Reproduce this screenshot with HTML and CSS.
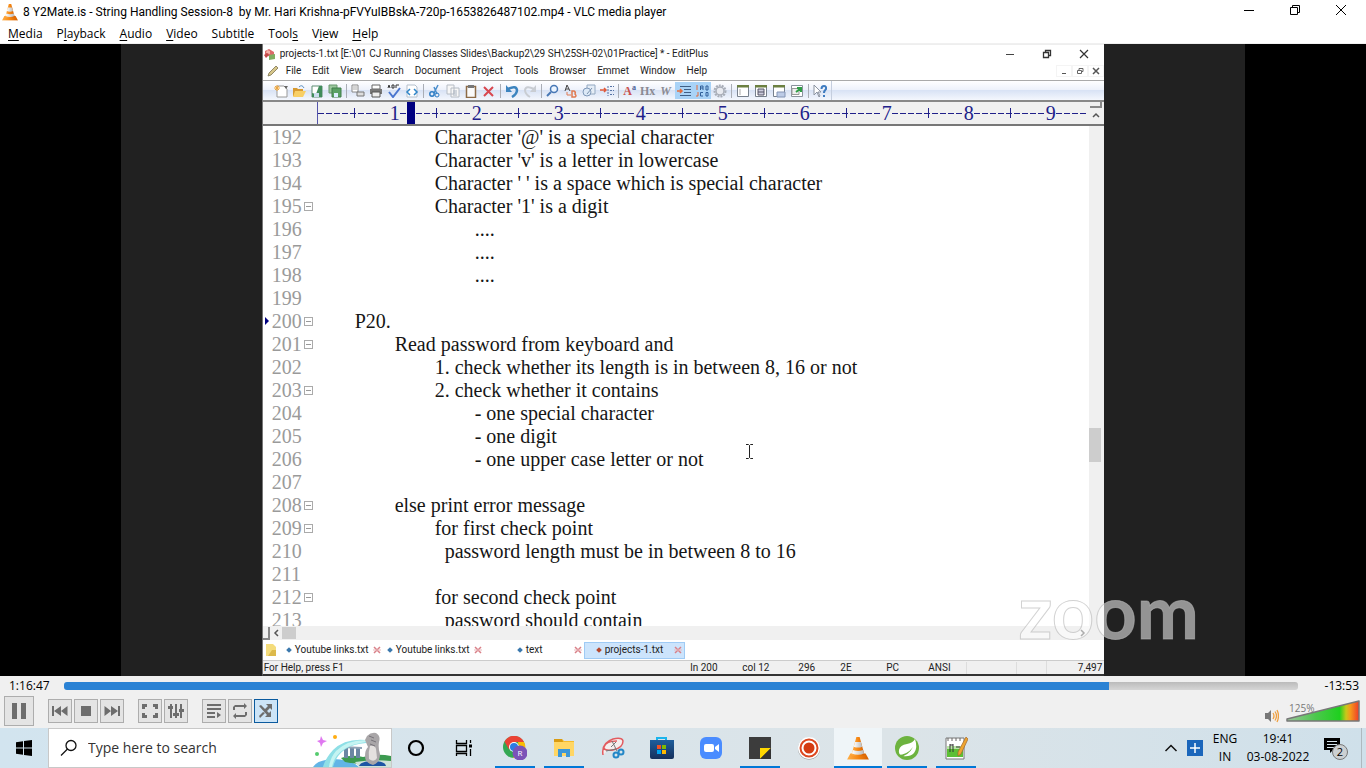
FILE: index.html
```html
<!DOCTYPE html>
<html lang="en">
<head>
<meta charset="utf-8">
<title>VLC media player</title>
<link rel="stylesheet" href="styles.css">
</head>
<body>
<svg class="defs" aria-hidden="true">
  <defs>
    <linearGradient id="coneOrange" x1="0" x2="1"><stop offset="0" stop-color="#ffb04a"/><stop offset=".5" stop-color="#f68712"/><stop offset="1" stop-color="#d35d00"/></linearGradient>
    <linearGradient id="coneWhite" x1="0" x2="1"><stop offset="0" stop-color="#fff"/><stop offset="1" stop-color="#b9b9b9"/></linearGradient>
    <linearGradient id="vol" x1="0" x2="1"><stop offset="0" stop-color="#9cc49c"/><stop offset=".4" stop-color="#4cc84c"/><stop offset=".73" stop-color="#1fd01f"/><stop offset=".82" stop-color="#c8c81a"/><stop offset=".88" stop-color="#f59a1c"/><stop offset="1" stop-color="#f03a28"/></linearGradient>
    <linearGradient id="store" x1="0" x2="0" y1="0" y2="1"><stop offset="0" stop-color="#1f5e9c"/><stop offset="1" stop-color="#16305c"/></linearGradient>
    <symbol id="cone" viewBox="0 0 20 22">
      <path d="M3 16h14l3 5.500H0z" fill="url(#coneOrange)"/>
      <path d="M8.500 1h3l4.500 16.500q-6 2.500-12 0z" fill="url(#coneOrange)"/>
      <path d="M7.300 5.500h5.400l1.200 4.300q-3.900 1.600-7.800 0z" fill="url(#coneWhite)"/>
      <path d="M5.300 12.800q4.700 1.900 9.400 0l.9 3.200q-5.600 2.200-11.200 0z" fill="url(#coneWhite)"/>
    </symbol>
    <symbol id="closeTab" viewBox="0 0 8 8"><path d="M1 1l6 6M7 1L1 7" stroke="#d98088" stroke-width="1.500"/><path d="M0 4h8" stroke="#eab9bd"/></symbol>
  </defs>
</svg>

<header class="titlebar">
  <svg class="app-icon" viewBox="0 0 20 22"><use href="#cone"/></svg>
  <h1>8 Y2Mate.is - String Handling Session-8&nbsp; by Mr. Hari Krishna-pFVYuIBBskA-720p-1653826487102.mp4 - VLC media player</h1>
  <div class="win-buttons">
    <button aria-label="Minimize"><svg viewBox="0 0 12 12"><path d="M1 6.500h10" stroke="#000"/></svg></button>
    <button aria-label="Restore"><svg viewBox="0 0 12 12"><path d="M1.500 3.500h7v7h-7zM3.500 3V1.500h7v7H9" fill="none" stroke="#000"/></svg></button>
    <button aria-label="Close"><svg viewBox="0 0 12 12"><path d="M1 1l10 10M11 1L1 11" stroke="#000"/></svg></button>
  </div>
</header>

<nav class="menubar">
  <button><u>M</u>edia</button><button>P<u>l</u>ayback</button><button><u>A</u>udio</button><button><u>V</u>ideo</button><button>Subti<u>t</u>le</button><button>Tool<u>s</u></button><button>V<u>i</u>ew</button><button><u>H</u>elp</button>
</nav>

<main class="video">
  <div class="stage">
    <section class="editor">
      <div class="ed-title">
        <svg class="ed-icon" viewBox="0 0 12 12"><path d="M1 3l4-2 5 3v4l-4 1-5-3z" fill="#dc6a6a"/><path d="M3 2l3 1v3l-4-1z" fill="#f4b3a8"/><path d="M5 7l6-1v5l-6 1z" fill="#7fae62"/><path d="M0 7l3-2 2 2-3 3z" fill="#c44747"/></svg>
        <span class="ed-name">projects-1.txt [E:\01 CJ Running Classes Slides\Backup2\29 SH\25SH-02\01Practice] * - EditPlus</span>
        <div class="ed-win">
          <button aria-label="Minimize editor"><svg viewBox="0 0 10 10"><path d="M1 5.500h8" stroke="#444"/></svg></button>
          <button aria-label="Restore editor"><svg viewBox="0 0 10 10"><path d="M1.500 3.500h5v5h-5zM3.500 3V1.500h5v5H7" fill="none" stroke="#333" stroke-width="1.300"/></svg></button>
          <button aria-label="Close editor"><svg viewBox="0 0 10 10"><path d="M1 1l8 8M9 1L1 9" stroke="#333" stroke-width="1.200"/></svg></button>
        </div>
      </div>
      <div class="ed-menu">
        <svg class="ed-icon" viewBox="0 0 12 12"><path d="M1 11l1-3 7-7 2 2-7 7z" fill="#d6c68a" stroke="#7d7450" stroke-width=".8"/></svg>
        <button>File</button><button>Edit</button><button>View</button><button>Search</button><button>Document</button><button>Project</button><button>Tools</button><button>Browser</button><button>Emmet</button><button>Window</button><button>Help</button>
        <div class="doc-win">
          <button aria-label="Minimize document"><svg viewBox="0 0 8 8"><path d="M2 6.500h4" stroke="#555"/></svg></button>
          <button aria-label="Restore document"><svg viewBox="0 0 8 8"><path d="M1.500 3.500h4v3h-4zM3 3V1.500h4v3H6" fill="none" stroke="#666"/></svg></button>
          <button aria-label="Close document"><svg viewBox="0 0 8 8"><path d="M1 1l6 6M7 1L1 7" stroke="#555" stroke-width="1.500"/></svg></button>
        </div>
      </div>
      <div class="ed-tools">
        <button aria-label="New"><svg viewBox="0 0 14 14"><path d="M3 2h7l3 3v8H3z" fill="#fff" stroke="#999"/><path d="M0 4h6M3 1v6M1 2l4 4M5 2L1 6" stroke="#f0a63a"/><path d="M10 2h4l-2 3z" fill="#666"/></svg></button>
        <button aria-label="Open"><svg viewBox="0 0 14 14"><path d="M1 4h4l1 1h5v7H1z" fill="#d79a32"/><path d="M3 7h11l-3 6H1z" fill="#f8cf66"/><path d="M7 3q3-3 5 1" fill="none" stroke="#5c8fbf"/></svg></button>
        <button aria-label="Save"><svg viewBox="0 0 14 14"><path d="M2 2h10v11H2z" fill="#fff" stroke="#5e8d73"/><path d="M9 2h3v11H2V9l4 1z" fill="#3f8c5a"/><path d="M4 9h5v4H4z" fill="#cde"/></svg></button>
        <button aria-label="Save all"><svg viewBox="0 0 14 14"><path d="M1 1h8v8H1z" fill="#9bc79d" stroke="#69976f"/><path d="M4 4h9v9H4z" fill="#5aa164" stroke="#3f7d4b"/><path d="M6 9h4v4H6z" fill="#def"/></svg></button>
        <i class="sep"></i>
        <button aria-label="Preview"><svg viewBox="0 0 14 14"><path d="M1 1h6v7H1z" fill="#fff" stroke="#888"/><path d="M2 3h4M2 5h4" stroke="#aaa"/><path d="M6 8h7v4H6z" fill="#ddd" stroke="#777"/></svg></button>
        <button aria-label="Print"><svg viewBox="0 0 14 14"><path d="M3 1h8v4H3z" fill="#fff" stroke="#666"/><path d="M1 5h12v5H1z" fill="#777"/><path d="M3 8h8v5H3z" fill="#eee" stroke="#555"/></svg></button>
        <button aria-label="Spelling"><svg viewBox="0 0 14 14"><path d="M2 8l4 5 7-9" fill="none" stroke="#4b76cf" stroke-width="2"/><path d="M1 4l1-3 1 3M5 1v3h2V1zM9 4V1h3" fill="none" stroke="#333"/></svg></button>
        <button aria-label="View source"><svg viewBox="0 0 14 14"><path d="M2 1h8l2 2v10H2z" fill="#fff" stroke="#b5c0cc"/><path d="M5 5L2 8l3 3M9 5l3 3-3 3" fill="none" stroke="#2e85c9" stroke-width="1.500"/></svg></button>
        <i class="sep"></i>
        <button aria-label="Cut"><svg viewBox="0 0 14 14"><path d="M10 1L6 9M6 3l3 7" stroke="#4b8fcd" stroke-width="1.500"/><circle cx="4" cy="10" r="2.200" fill="none" stroke="#2d7cc4" stroke-width="1.500"/><circle cx="9" cy="11" r="2" fill="none" stroke="#2d7cc4"/></svg></button>
        <button aria-label="Copy"><svg viewBox="0 0 14 14"><path d="M1 1h7v9H1zM5 4h8v9H5z" fill="#f7f7f7" stroke="#b6bcc4"/><path d="M7 7h4M7 9h4M7 11h4" stroke="#a9b3c0"/></svg></button>
        <button aria-label="Paste"><svg viewBox="0 0 14 14"><path d="M2.500 2.500h9v11h-9z" fill="#fafafa" stroke="#8d6b47" stroke-width="1.500"/><path d="M4 1h6v3H4z" fill="#777"/></svg></button>
        <button aria-label="Delete"><svg viewBox="0 0 14 14"><path d="M2 3l9 9M11 3l-9 9" stroke="#d8474f" stroke-width="2"/></svg></button>
        <i class="sep"></i>
        <button aria-label="Undo"><svg viewBox="0 0 14 14"><path d="M3 5q8-4 9 1 0 4-5 7" fill="none" stroke="#3c84bf" stroke-width="2.500"/><path d="M1 1v7h6z" fill="#3c84bf"/></svg></button>
        <button aria-label="Redo"><svg viewBox="0 0 14 14"><path d="M11 5Q3 1 2 6q0 4 5 7" fill="none" stroke="#c9cdd3" stroke-width="2"/><path d="M13 1v7H7z" fill="#c9cdd3"/></svg></button>
        <i class="sep"></i>
        <button aria-label="Find"><svg viewBox="0 0 14 14"><circle cx="8" cy="5" r="3.500" fill="#eaf4ff" stroke="#4777b5" stroke-width="1.500"/><path d="M5 8l-4 4" stroke="#4777b5" stroke-width="2"/></svg></button>
        <button aria-label="Replace"><svg viewBox="0 0 14 14"><path d="M1 7l2-6 3 6M2 5h3" fill="none" stroke="#444"/><path d="M8 7v6h3q2-1 0-3 1-2-1-3z" fill="none" stroke="#e07b52" stroke-width="1.500"/><path d="M3 8v3h4" fill="none" stroke="#e07b52"/></svg></button>
        <button aria-label="Find in files"><svg viewBox="0 0 14 14"><path d="M5 1h8v9H5z" fill="#e5edf6" stroke="#94a9c1"/><circle cx="5" cy="8" r="4" fill="#dce9f7" stroke="#8099b9"/><path d="M5 10l5-6" stroke="#7b92ae"/></svg></button>
        <button aria-label="Go to line"><svg viewBox="0 0 14 14"><path d="M0 6h6M4 4l2 2-2 2" fill="none" stroke="#e0593a" stroke-width="1.500"/><path d="M8 2v10M10 2.500h4M10 6.500h4M10 10.500h4" stroke="#5673a5" stroke-dasharray="2 1"/></svg></button>
        <i class="sep"></i>
        <button aria-label="Font"><span class="serif red">A<sup>a</sup></span></button>
        <button aria-label="Hex viewer"><span class="serif grey">Hx</span></button>
        <button aria-label="Word wrap"><span class="serif grey"><em>W</em></span></button>
        <button class="on" aria-label="Auto indent"><svg viewBox="0 0 14 14"><path d="M3 2.500h11M7 5.500h7M7 8.500h7M3 11.500h11" stroke="#3f5f86"/><path d="M0 7h5M3 5l2 2-2 2" fill="none" stroke="#e36c3c" stroke-width="1.500"/></svg></button>
        <button class="on" aria-label="Line number"><svg viewBox="0 0 14 14"><path d="M2 1v5M1 12h2V8" stroke="#e36c3c" fill="none"/><path d="M5.500 6V2h2.500v4M5.500 4h2.500M11 2v4h2V2zM8 8.500H5.500V12H8M11 8.500V12h2V8.500z" fill="none" stroke="#315f99"/></svg></button>
        <button aria-label="Preferences"><svg viewBox="0 0 14 14"><circle cx="7" cy="7" r="5.500" fill="none" stroke="#a8adb7" stroke-width="2" stroke-dasharray="2 1"/><circle cx="7" cy="7" r="4" fill="#e8eaf0" stroke="#a8adb7" stroke-width="1.500"/></svg></button>
        <i class="sep"></i>
        <button aria-label="Window"><svg viewBox="0 0 14 14"><path d="M1.500 1.500h11v11h-11z" fill="#fff" stroke="#77808c"/><path d="M1 1h12v2.500H1z" fill="#6c8041"/><path d="M3 6h2M3 8h2M3 10h2" stroke="#aaa"/></svg></button>
        <button aria-label="Document list"><svg viewBox="0 0 14 14"><path d="M1.500 1.500h11v11h-11z" fill="#fff" stroke="#77808c"/><path d="M1 1h12v2.500H1z" fill="#6c8041"/><path d="M4 5h6v6H4zM4 8h6" fill="#ccd" stroke="#556"/></svg></button>
        <button aria-label="Output"><svg viewBox="0 0 14 14"><path d="M1.500 1.500h11v11h-11z" fill="#fff" stroke="#77808c"/><path d="M1 1h12v2.500H1z" fill="#6c8041"/><path d="M5 8h8v5H5z" fill="#bccbe6" stroke="#8495b5"/></svg></button>
        <button aria-label="Browser"><svg viewBox="0 0 14 14"><path d="M1.500 1.500h11v11h-11z" fill="#fff" stroke="#8a929c"/><path d="M2 4.500h7v6H2z" fill="#eee" stroke="#999"/><path d="M6 8l4-3M7 4h4v4" fill="none" stroke="#2f9d45" stroke-width="2"/></svg></button>
        <i class="sep"></i>
        <button aria-label="Context help"><svg viewBox="0 0 14 14"><path d="M1 1v10l3-3 2 5 1-1-2-4h3z" fill="#fff" stroke="#8c94a1"/><path d="M8.500 5q0-3 2.500-3t2 3q-2 2-2 4M11 11v2" fill="none" stroke="#3f7cc0" stroke-width="2"/></svg></button>
        <i class="sep last"></i>
      </div>
      <div class="ruler">
        <div class="scale">
          <span>1</span><span>2</span><span>3</span><span>4</span><span>5</span><span>6</span><span>7</span><span>8</span><span>9</span><span></span>
          <i class="caret-col"></i>
        </div>
        <div class="split"><i></i><svg viewBox="0 0 8 6"><path d="M1 5l3-3 3 3" fill="none" stroke="#555" stroke-width="1.500"/></svg></div>
      </div>
      <div class="doc">
        <ol class="lines">
          <li><b>192</b><i></i><pre>			Character '@' is a special character</pre></li>
          <li><b>193</b><i></i><pre>			Character 'v' is a letter in lowercase</pre></li>
          <li><b>194</b><i></i><pre>			Character ' ' is a space which is special character</pre></li>
          <li class="fold"><b>195</b><i></i><pre>			Character '1' is a digit</pre></li>
          <li><b>196</b><i></i><pre>				....</pre></li>
          <li><b>197</b><i></i><pre>				....</pre></li>
          <li><b>198</b><i></i><pre>				....</pre></li>
          <li><b>199</b><i></i><pre></pre></li>
          <li class="fold current"><b>200</b><i></i><pre>	P20.</pre></li>
          <li class="fold"><b>201</b><i></i><pre>		Read password from keyboard and</pre></li>
          <li><b>202</b><i></i><pre>			1. check whether its length is in between 8, 16 or not</pre></li>
          <li class="fold"><b>203</b><i></i><pre>			2. check whether it contains</pre></li>
          <li><b>204</b><i></i><pre>				- one special character</pre></li>
          <li><b>205</b><i></i><pre>				- one digit</pre></li>
          <li><b>206</b><i></i><pre>				- one upper case letter or not</pre></li>
          <li><b>207</b><i></i><pre></pre></li>
          <li class="fold"><b>208</b><i></i><pre>		else print error message</pre></li>
          <li class="fold"><b>209</b><i></i><pre>			for first check point</pre></li>
          <li><b>210</b><i></i><pre>			  password length must be in between 8 to 16</pre></li>
          <li><b>211</b><i></i><pre></pre></li>
          <li class="fold"><b>212</b><i></i><pre>			for second check point</pre></li>
          <li><b>213</b><i></i><pre>			  password should contain</pre></li>
        </ol>
        <div class="vscroll"><i></i></div>
        <svg class="ibeam" viewBox="0 0 9 15"><path d="M1 .5h2.500l1 1 1-1H8M1 14.500h2.500l1-1 1 1H8M4.500 1.500v12" fill="none" stroke="#222"/></svg>
      </div>
      <div class="hscroll">
        <i class="grip"></i>
        <svg viewBox="0 0 6 8"><path d="M5 1L2 4l3 3" fill="none" stroke="#555" stroke-width="1.500"/></svg>
        <i class="thumb"></i>
        <svg class="right" viewBox="0 0 6 8"><path d="M1 1l3 3-3 3" fill="none" stroke="#555" stroke-width="1.500"/></svg>
      </div>
      <div class="tabs">
        <svg class="folder" viewBox="0 0 12 12"><path d="M1 0h7l3 3v9H1z" fill="#f4dc7c"/><path d="M7 6h4v6H3z" fill="#dcb94b"/></svg>
        <button><i></i><span>Youtube links.txt</span><svg class="x"><use href="#closeTab"/></svg></button>
        <button><i></i><span>Youtube links.txt</span><svg class="x"><use href="#closeTab"/></svg></button>
        <button><i></i><span>text</span><svg class="x"><use href="#closeTab"/></svg></button>
        <button class="active"><i></i><span>projects-1.txt</span><svg class="x"><use href="#closeTab"/></svg></button>
      </div>
      <div class="status">
        <span class="help">For Help, press F1</span><span>ln 200</span><span>col 12</span><span>296</span><span>2E</span><span>PC</span><span>ANSI</span><span class="cell"></span><span class="cell"></span><span class="size">7,497</span>
      </div>
    </section>
    <div class="watermark">zoom</div>
  </div>
</main>

<section class="controls">
  <div class="seek">
    <span>1:16:47</span>
    <input type="range" min="0" max="5440" value="4607" aria-label="Position" style="--played: 84.7%">
    <span>-13:53</span>
  </div>
  <div class="buttons">
    <button class="big" aria-label="Pause"><svg viewBox="0 0 16 18"><path d="M1 1h5v16H1zM10 1h5v16h-5z"/></svg></button>
    <div class="group">
      <button aria-label="Previous"><svg viewBox="0 0 16 16"><path d="M0 3h2v10H0zM2 8l7-5v10zM9 8l6.500-5v10z"/></svg></button>
      <button aria-label="Stop"><svg viewBox="0 0 16 16"><path d="M3 3h10v10H3z"/></svg></button>
      <button aria-label="Next"><svg viewBox="0 0 16 16"><path d="M14 3h2v10h-2zM14 8L7 3v10zM7 8L.5 3v10z"/></svg></button>
    </div>
    <div class="group">
      <button aria-label="Fullscreen"><svg viewBox="0 0 16 16"><path d="M0 6V1h5v3H3v2zM11 1h5v5h-3V4h-2zM0 10h3v2h2v3H0zM13 10h3v5h-5v-3h2z"/></svg></button>
      <button aria-label="Extended settings"><svg viewBox="0 0 16 16"><path d="M2 1h2v14H2zM7 1h2v14H7zM12 1h2v14h-2zM0 3h5v3H0zM5 10h6v3H5zM11 6h5v3h-5z"/></svg></button>
    </div>
    <div class="group">
      <button aria-label="Playlist"><svg viewBox="0 0 16 16"><path d="M1 1h14v2H1zM1 5h14v2H1zM1 9h8v2H1zM1 13h8v2H1zM11 9l4 3-4 3z"/></svg></button>
      <button aria-label="Loop"><svg viewBox="0 0 16 16"><path d="M1 7V4l2-2h9V0l3 3-3 3V4H3v3zM15 9v3l-2 2H4v2l-3-3 3-3v2h9V9z"/></svg></button>
      <button class="on" aria-label="Random"><svg viewBox="0 0 16 16"><path d="M1 3l2-1 8 8 2-2v6H7l2-2zM14 1v6l-2-2-3 3-2-2 3-3-2-2zM1 13l4-4 2 1-5 5z"/></svg></button>
    </div>
    <div class="volume">
      <svg class="speaker" viewBox="0 0 14 14"><path d="M0 4h3l3-3v12l-3-3H0z" fill="#777"/><path d="M8 4q2 3 0 6M10 2.500q3 4.500 0 9M12 1q3 6 0 12" fill="none" stroke="#f0a040" stroke-width="1.300"/></svg>
      <div class="level"><span>125%</span><svg viewBox="0 0 76 23"><path d="M2 19L74 1v20H2z" fill="url(#vol)" stroke="#777" stroke-width="1.500" stroke-linejoin="round"/></svg></div>
    </div>
  </div>
</section>

<footer class="taskbar">
  <button class="start" aria-label="Start"><svg viewBox="0 0 16 16"><path d="M0 2.300L7 1.300v6.200H0zM8 1.100L16 0v7.500H8zM0 8.500h7v6.200l-7-1zM8 8.500h8V16l-8-1.100z"/></svg></button>
  <label class="search">
    <svg class="lens" viewBox="0 0 18 18"><circle cx="11" cy="6.500" r="5" fill="none" stroke="#111" stroke-width="1.300"/><path d="M7.500 10L1 16.500" stroke="#111" stroke-width="1.300"/></svg>
    <input type="text" placeholder="Type here to search" aria-label="Type here to search">
    <svg class="art" viewBox="0 0 78 38">
      <path d="M0 38q4-7 20-8 20 1 26 8z" fill="#62b5e6"/>
      <path d="M28 29q10-4 22-1 14-4 28-1v7q-20 4-46-1z" fill="#3c9a50"/>
      <path d="M42 33q18-3 36-1v6H46z" fill="#cfe3d8"/>
      <path d="M31 19h4v10h-4zM37 19h4v10h-4zM43 19h4v10h-4z" fill="#6b86a3"/><path d="M29 17l20 1v2l-20-1z" fill="#8fa3b6"/>
      <path d="M53 11Q32 9 20 21 12 30 10 38h10q6-22 33-24z" fill="#8edfe6"/>
      <path d="M53 11Q34 11 23 22q-6 7-7 16h3q4-21 34-25z" fill="#c5f4f2"/>
      <path d="M46 37q2-5 14-5 12 0 13 5z" fill="#1d55a4"/>
      <path d="M54 7q4-4 9-3 5 3 3 9-1 6 1 12 0 9-7 11-8-2-8-9 0-6 3-9l-3-7z" fill="#a9a6a8"/>
      <path d="M57 17q5-1 6 3l1 9q-3 5-8 1-1-7 1-13z" fill="#e4e1df"/><path d="M56 7l5 2M58 11l5 2M57 15l5 2" stroke="#77747a"/>
      <path d="M4 12l3-1 1-4 2 4 4 1-4 2-2 4-1-4z" fill="#df78f0"/><circle cx="22" cy="8" r="2" fill="#ffad12"/><circle cx="4" cy="25" r="2" fill="#55cc6e"/>
    </svg>
  </label>
  <button aria-label="Cortana"><svg viewBox="0 0 24 24"><circle cx="12" cy="12" r="7" fill="none" stroke="#000" stroke-width="2.200"/></svg></button>
  <button aria-label="Task view"><svg viewBox="0 0 24 24"><path d="M4.500 4v3.500h10V4M4.500 9.500h10v6h-10zM4.500 20v-2.500h10V20M18.500 4v3M18.500 13v7" fill="none" stroke="#000" stroke-width="1.300"/><path d="M17 8.500h3v3h-3z"/></svg></button>
  <div class="pinned">
    <button class="run" aria-label="Chrome"><svg viewBox="0 0 24 24"><circle cx="11" cy="11" r="11" fill="#34a853"/><path d="M1.500 5.500A11 11 0 0 1 21 6H11l-5 7.500z" fill="#ea4335"/><path d="M21 6a11 11 0 0 1-11 16l6-9-1-7z" fill="#fbbc05"/><circle cx="11" cy="11" r="5" fill="#fff"/><circle cx="11" cy="11" r="4" fill="#2c7be5"/><circle cx="17" cy="17" r="7.500" fill="#7b53b8"/><text x="17" y="20" font-size="8" text-anchor="middle" fill="#fff" font-family="Open Sans, sans-serif">R</text></svg></button>
    <button class="run" aria-label="File Explorer"><svg viewBox="0 0 24 24"><path d="M2 3h8l2 2h10v15H2z" fill="#f5bb2b"/><path d="M2 6h20v14H2z" fill="#ffd664"/><path d="M2 3h8l1 3H2z" fill="#d99b12"/><path d="M6 13h12v8h-4v-4h-4v4H6z" fill="#3b97d8"/></svg></button>
    <button aria-label="Snip"><svg viewBox="0 0 24 24"><path d="M2 19Q0 7 12 3q9-2 10 2 0 7-10 9-10 1-9-3 2-6 13-6" fill="#f5eeee" stroke="#e25b5f" stroke-width="1.500"/><path d="M11 5l5 10M15 6l-5 5M5 15l10-2" stroke="#777"/><circle cx="15" cy="19" r="2.500" fill="none" stroke="#2487c7" stroke-width="2"/><circle cx="20" cy="16" r="2.500" fill="none" stroke="#2487c7" stroke-width="2"/></svg></button>
    <button aria-label="Store"><svg viewBox="0 0 24 24"><path d="M7 6V2h9v4" fill="none" stroke="#1bb4ec" stroke-width="2"/><path d="M0 4h24v17q0 2-2 2H2q-2 0-2-2z" fill="url(#store)"/><path d="M7 9h4v4H7z" fill="#f25022"/><path d="M12 9h4v4h-4z" fill="#7fba00"/><path d="M7 14h4v4H7z" fill="#00a4ef"/><path d="M12 14h4v4h-4z" fill="#ffb900"/></svg></button>
    <button aria-label="Zoom"><svg viewBox="0 0 24 24"><rect x="1" y="1" width="22" height="22" rx="6" fill="#4a8cff"/><rect x="5" y="8" width="10" height="8" rx="2" fill="#fff"/><path d="M16 11l4-3v8l-4-3z" fill="#fff"/></svg></button>
    <button class="run" aria-label="Sticky Notes"><svg viewBox="0 0 24 24"><path d="M1 1h22v22H1z" fill="#3c3c3c"/><path d="M12 12h11L12 23z" fill="#ffd800"/><path d="M23 12v11H12z" fill="#333"/></svg></button>
    <button aria-label="Recorder"><svg viewBox="0 0 24 24"><circle cx="12" cy="12.500" r="11" fill="#888"/><circle cx="12" cy="12" r="11" fill="#fff"/><circle cx="12" cy="12" r="8.500" fill="#fff" stroke="#dd4820" stroke-width="2"/><circle cx="12" cy="12" r="5.500" fill="#d43c12"/></svg></button>
    <button class="run current-app" aria-label="VLC"><svg viewBox="0 0 20 22"><use href="#cone"/></svg></button>
    <button class="run" aria-label="Spring"><svg viewBox="0 0 24 24"><circle cx="12" cy="12" r="12" fill="#6db33f"/><path d="M20 3q3 9-1 14-4 4-11 3-5-1-4-6 1-5 8-6 6-1 8-5z" fill="#fff"/><path d="M3 19q9 0 15-8-4 8-13 10z" fill="#6db33f"/></svg></button>
    <button class="run" aria-label="EditPlus"><svg viewBox="0 0 24 24"><path d="M2 2h18v21H2z" fill="#fff" stroke="#777"/><path d="M3 13h16v8H3z" fill="#5cbf35"/><path d="M3 10h16v3H3z" fill="#b9e6a6"/><path d="M4 2v3M8 2v3M12 2v3M16 2v3" stroke="#666"/><path d="M6 8v8M9 8v8M6 9h3M12 11h4" stroke="#333"/><path d="M22 1l2 2-7 15-3 2v-4z" fill="#efa530" stroke="#a1672d" stroke-width=".7"/></svg></button>
  </div>
  <div class="tray">
    <button class="chevron" aria-label="Show hidden icons"><svg viewBox="0 0 14 14"><path d="M1.500 10L7 4.500 12.500 10" fill="none" stroke="#111" stroke-width="1.500"/></svg></button>
    <button class="plus" aria-label="Add"><svg viewBox="0 0 16 16"><path d="M0 0h16v16H0z" fill="#1b66bb"/><path d="M8 3v10M3 8h10" stroke="#fff" stroke-width="1.500"/></svg></button>
    <button class="lang">ENG<br>IN</button>
    <button class="clock">19:41<br>03-08-2022</button>
    <button class="notice" aria-label="Notifications"><svg viewBox="0 0 24 24"><path d="M0 2h16v12H9l-3 3v-3H0z"/><path d="M3 5.500h10M3 8.500h10M3 11.500h7" stroke="#d5e3ea"/><circle cx="16" cy="16" r="7.500" fill="#ccd0d2" stroke="#777"/><text x="16" y="20" font-size="11" text-anchor="middle" font-family="Open Sans, sans-serif">2</text></svg></button>
  </div>
</footer>
</body>
</html>
```
FILE: styles.css
```css
* { box-sizing: border-box; }
body {
  margin: 0;
  height: 100vh;
  display: flex;
  flex-direction: column;
  overflow: hidden;
  font: 12px/16px "Open Sans", "Noto Sans", sans-serif;
  color: #000;
  background: #f0f0f0;
}
button {
  border: 0;
  padding: 0;
  margin: 0;
  background: none;
  font: inherit;
  color: inherit;
  display: flex;
  align-items: center;
  justify-content: center;
}
svg { display: block; flex: none; }
.defs { position: absolute; width: 0; height: 0; }

.titlebar { display: flex; align-items: center; height: 24px; padding-left: 2px; background: #fff; }
.app-icon { width: 16px; height: 18px; }
.titlebar h1 { flex: 1; margin: 0 0 0 5px; font: 400 12px/16px Roboto, sans-serif; white-space: nowrap; overflow: hidden; }
.win-buttons { display: flex; align-self: flex-start; padding-right: 2px; }
.win-buttons button { width: 46px; height: 20px; }
.win-buttons svg { width: 12px; height: 12px; }

.menubar { display: flex; gap: 14px; height: 20px; padding: 0 8px; background: #fff; border-bottom: 1px solid #f0f0f0; }
.menubar u { text-underline-offset: 2px; }

.video { flex: 1; min-height: 0; display: flex; justify-content: center; background: #000; }
.stage { position: relative; height: 100%; aspect-ratio: 16 / 9; display: flex; justify-content: center; background: #212121; }
.editor { width: 75%; display: flex; flex-direction: column; background: #fff; border-left: 1px solid #777; border-bottom: 2px solid #333; font-family: Roboto, sans-serif; font-size: 10px; color: #222; }

.ed-title, .ed-menu { display: flex; align-items: center; height: 18px; padding-left: 1px; flex: none; white-space: nowrap; }
.ed-title { border-top: 1px solid #eee; }
.ed-icon { width: 12px; height: 12px; }
.ed-name { flex: 1; margin-left: 4px; }
.ed-win { display: flex; padding-right: 2px; }
.ed-win button { width: 37px; height: 16px; }
.ed-win svg { width: 10px; height: 10px; }
.ed-menu { gap: 11px; padding-left: 4px; }
.ed-menu .ed-icon { margin-right: -4px; }
.doc-win { display: flex; margin-left: auto; }
.doc-win button { width: 16px; height: 12px; border: 1px solid #f4f4f4; }
.doc-win svg { width: 8px; height: 8px; }

.ed-tools {
  display: flex;
  align-items: center;
  flex: none;
  height: 22px;
  padding-left: 9px;
  border-top: 1px solid #aaa;
  border-bottom: 2px solid #888;
  background: linear-gradient(#fff, #eef2fb 45%, #d9e3f5 50%, #f4f7fd);
}
.ed-tools button { width: 18px; height: 17px; }
.ed-tools button.on { background: #a9d3f7; }
.ed-tools svg { width: 14px; height: 14px; }
.sep { width: 1px; height: 14px; margin: 0 2px; background: #a9adb5; }
.sep.last { height: 19px; background: #c5cede; }
.serif { font: bold 12px/14px "Liberation Serif", serif; }
.serif sup { font-size: 8px; line-height: 0; color: #4b5f94; }
.red { color: #c9504c; }
.grey { color: #8a8a93; }

.ruler { display: flex; flex: none; height: 24px; padding-left: 54px; background: #f0f0f0; border-bottom: 2px solid #777; }
.scale { position: relative; flex: 1; display: flex; overflow: hidden; border-left: 1px solid #5555aa; }
.scale span {
  flex: 0 0 82px;
  height: 22px;
  text-align: right;
  font: 20px/22px "Liberation Serif", serif;
  color: #20208a;
  background:
    linear-gradient(#20208a, #20208a) 45% 50% / 1px 10px no-repeat,
    repeating-linear-gradient(90deg, #20208a 0 6px, transparent 6px 8px) 0 50% / 72px 1px no-repeat;
}
.caret-col { position: absolute; left: 89px; top: 0; width: 8px; height: 22px; background: #000080; }
.split { width: 16px; display: flex; flex-direction: column; align-items: center; gap: 4px; }
.split i { width: 12px; height: 6px; margin-left: 2px; border: solid #888; border-width: 0 2px 2px 0; align-self: flex-start; }
.split svg { width: 8px; height: 6px; }

.doc { position: relative; flex: 1; min-height: 0; display: flex; overflow: hidden; }
.lines { flex: 1; margin: 0; padding: 0; list-style: none; font: 20px/23px "Liberation Serif", serif; color: #161616; }
.lines li { display: grid; grid-template-columns: 9px 30px 13px 1fr; height: 23px; align-items: center; }
.lines b { grid-column: 2; font-weight: 400; color: #9a9a9a; }
.lines pre { margin: 0; font: inherit; tab-size: 8; height: 23px; }
.lines i { width: 9px; height: 9px; margin-left: 2px; visibility: hidden; border: 1px solid #aaa; background: linear-gradient(#999, #999) 50% 50% / 5px 1px no-repeat; }
.lines .fold i { visibility: visible; }
.current { position: relative; }
.lines .current::before { content: ""; position: absolute; left: 2px; top: 7px; border: 4px solid transparent; border-left-color: #000080; }
.vscroll { width: 15px; background: #f0f0f0; padding-top: 302px; }
.vscroll i { display: block; width: 12px; height: 34px; background: #cdcdcd; }
.ibeam { position: absolute; left: 482px; top: 318px; width: 9px; height: 15px; }

.hscroll { display: flex; align-items: center; flex: none; height: 14px; background: #f0f0f0; }
.hscroll svg { width: 6px; height: 8px; margin: 0 3px; }
.grip { width: 7px; height: 13px; border: solid #888; border-width: 0 2px 2px 0; }
.thumb { width: 14px; height: 12px; background: #cdcdcd; }
.hscroll .right { margin: 0 18px 0 auto; }

.tabs { display: flex; align-items: center; flex: none; height: 20px; }
.folder { width: 12px; height: 12px; margin: 0 4px 0 2px; }
.tabs button { width: 101px; height: 17px; padding: 0 2px 0 7px; gap: 4px; }
.tabs span { flex: 1; text-align: left; white-space: nowrap; }
.tabs i { flex: none; width: 4px; height: 4px; background: #3a78ad; transform: rotate(45deg); }
.tabs .x { width: 8px; height: 8px; }
.tabs button:nth-of-type(3) i { margin-left: 28px; }
.tabs .active { background: #cce4fc; border: 1px solid #9fcbf5; padding-left: 12px; }
.tabs .active i { background: #b5482e; }

.status {
  display: grid;
  grid-template-columns: 1fr 52px 56px 42px 46px 42px 38px 50px 30px 58px;
  align-items: center;
  flex: none;
  height: 14px;
  line-height: 13px;
  background: #f0f0f0;
  border-top: 1px solid #ccc;
  white-space: nowrap;
}
.status .help { padding-left: 1px; }
.status .cell { height: 12px; border-left: 1px solid #ddd; }
.status .size { text-align: right; padding-right: 2px; border-left: 1px solid #ddd; }

.watermark {
  position: absolute;
  right: 46px;
  bottom: 28px;
  font: 700 74px/74px Lato, sans-serif;
  color: rgba(255, 255, 255, .52);
  -webkit-text-stroke: 1px rgba(180, 180, 180, .6);
}

.controls { flex: none; height: 52px; background: #f0f0f0; }
.seek { display: flex; align-items: center; height: 19px; padding: 0 7px 0 9px; }
.seek span { width: 55px; white-space: nowrap; }
.seek span:last-child { text-align: right; width: 61px; }
.seek input {
  flex: 1;
  min-width: 0;
  appearance: none;
  height: 8px;
  margin: 0;
  border-radius: 3px;
  background: linear-gradient(90deg, #2a82d4 var(--played), transparent var(--played)), linear-gradient(#bbb, #d6d6d6);
}
.seek input::-webkit-slider-thumb { appearance: none; width: 1px; height: 8px; background: transparent; }
.buttons { display: flex; align-items: center; gap: 14px; height: 32px; padding: 0 5px 0 4px; }
.buttons button { width: 24px; height: 24px; border: 1px solid #adadad; background: #e4e4e4; }
.buttons .big { width: 30px; height: 30px; }
.buttons button svg { width: 16px; height: 16px; fill: #6d6d6d; }
.buttons .big svg { width: 16px; height: 18px; }
.buttons .on { background: #cce4f7; border-color: #0a5a9e; }
.group { display: flex; gap: 2px; }
.volume { display: flex; align-items: flex-end; gap: 6px; margin-left: auto; }
.speaker { width: 14px; height: 14px; }
.level { display: grid; }
.level > * { grid-area: 1 / 1; }
.level svg { width: 76px; height: 23px; }
.level span { font-size: 10px; line-height: 16px; padding-left: 4px; color: #777; }

.taskbar { display: flex; flex: none; height: 40px; background: linear-gradient(90deg, #d2e4ef, #dce4e8 65%, #cfe0ea); }
.taskbar > button { width: 48px; }
.taskbar button svg { width: 24px; height: 24px; }
.taskbar .start svg { width: 16px; height: 16px; }
.search { display: flex; align-items: center; width: 344px; padding-left: 11px; background: #fff; border: 1px solid #c8c8c8; }
.lens { width: 18px; height: 18px; }
.search input { flex: 1; min-width: 0; margin-left: 10px; padding: 0; border: 0; outline: 0; background: none; font: 14px/20px "Open Sans", sans-serif; }
.search input::placeholder { color: #333; opacity: 1; }
.art { width: 78px; height: 38px; }
.pinned { display: flex; gap: 1px; margin-left: 3px; }
.pinned button { width: 48px; position: relative; }
.pinned .current-app { background: #eff5f8; }
.pinned .run::after { content: ""; position: absolute; left: 4px; right: 4px; bottom: 0; height: 2px; background: #0078d7; }
.pinned .current-app::after { left: 0; right: 0; }
.tray { display: flex; align-items: center; margin-left: auto; padding-right: 4px; line-height: 18px; }
.tray button { height: 40px; }
.taskbar .chevron svg { width: 14px; height: 14px; }
.chevron { width: 22px; }
.taskbar .plus svg { width: 16px; height: 16px; }
.plus { width: 26px; }
.lang { width: 34px; }
.clock { width: 72px; white-space: nowrap; }
.tray .notice { width: 48px; padding-right: 4px; border-right: 1px solid #aeb9bf; }
```
